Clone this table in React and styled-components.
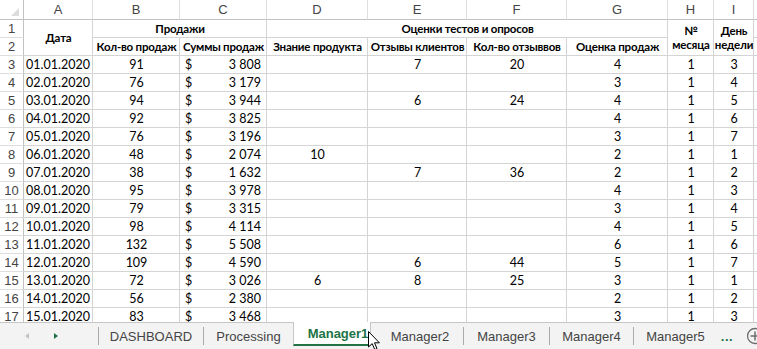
import React from "react";
import styled, { createGlobalStyle } from "styled-components";

const GREEN = "#217346";
const GRID = "#d4d4d4";
const HEAD_LINE = "#c2c2c2";
const HEAD_SEP = "#dedede";

const GlobalStyle = createGlobalStyle`
  html, body { margin: 0; padding: 0; background: #fff; overflow: hidden; }
  body { font-family: "Liberation Sans", Arial, sans-serif; }
`;

const Workbook = styled.div`
  position: relative;
  width: 757px;
  height: 349px;
  overflow: hidden;
  display: flex;
  flex-direction: column;
`;

const Sheet = styled.div`
  flex: 0 0 322px;
  overflow: hidden;
  display: grid;
  grid-template-columns: 24px 69px 87px 87px 101px 99px 100px 101px 46px 40px 1fr;
  grid-template-rows: 20px repeat(17, 18px);
  font-family: Lato, "Liberation Sans", sans-serif;
`;

const Corner = styled.div`
  box-sizing: border-box;
  border-right: 1px solid ${HEAD_LINE};
  border-bottom: 1px solid ${HEAD_LINE};
  display: flex;
  justify-content: flex-end;
  align-items: flex-end;
  padding: 0 4px 3px 0;
`;

const CornerMark = styled.div`
  width: 0;
  height: 0;
  border-left: 8px solid transparent;
  border-bottom: 8px solid #dcdcdc;
`;

const ColHead = styled.div`
  box-sizing: border-box;
  border-right: 1px solid ${HEAD_SEP};
  border-bottom: 1px solid ${HEAD_LINE};
  display: flex;
  align-items: center;
  justify-content: center;
  font-family: "Liberation Sans", Arial, sans-serif;
  font-size: 13px;
  color: #444;
`;

const RowHead = styled.div`
  box-sizing: border-box;
  border-right: 1px solid ${HEAD_LINE};
  border-bottom: 1px solid ${HEAD_SEP};
  display: flex;
  align-items: center;
  justify-content: center;
  font-family: "Liberation Sans", Arial, sans-serif;
  font-size: 13px;
  color: #444;
`;

const justify = { left: "flex-start", center: "center", right: "flex-end" };

const Cell = styled.div`
  box-sizing: border-box;
  border-right: 1px solid ${GRID};
  border-bottom: 1px solid ${GRID};
  grid-column: span ${(p) => p.$cs || 1};
  grid-row: span ${(p) => p.$rs || 1};
  display: flex;
  align-items: center;
  justify-content: ${(p) => justify[p.$align || "center"]};
  padding: 0 2px 0 3px;
  font-size: ${(p) => (p.$bold ? "11.5px" : "12.5px")};
  font-weight: ${(p) => (p.$bold ? 700 : 400)};
  letter-spacing: ${(p) => (p.$bold ? "-0.2px" : "0")};
  line-height: 14px;
  text-align: center;
  color: #000;
  white-space: ${(p) => (p.$wrap ? "normal" : "nowrap")};
  overflow: hidden;
`;

const MoneyCell = styled(Cell)`
  justify-content: space-between;
  padding: 0 5px 0 5px;
`;

// nav | sep | DASHBOARD | sep | Processing | Manager1 | Manager2 | sep | Manager3 | sep | Manager4 | sep | Manager5 | ... | +
const TabBar = styled.div`
  flex: 0 0 27px;
  box-sizing: border-box;
  border-top: 1px solid #c6c6c6;
  background: #f3f3f3;
  display: grid;
  grid-template-columns: 98px 1px 104px 1px 89px 78px 92px 1px 85px 1px 83px 1px 83px 20px 1fr;
  align-items: start;
  font-family: "Liberation Sans", Arial, sans-serif;
  font-size: 13px;
  color: #444;
`;

const Nav = styled.div`
  height: 26px;
  display: flex;
  align-items: center;
  padding-left: 25px;
  gap: 25px;
`;

const Arrow = styled.span`
  width: 0;
  height: 0;
  border-top: 3.5px solid transparent;
  border-bottom: 3.5px solid transparent;
  ${(p) =>
    p.$dir === "left"
      ? "border-right: 4px solid #c3c3c3;"
      : `border-left: 4px solid ${GREEN};`}
`;

const Sep = styled.span`
  height: 18px;
  margin-top: 4px;
  background: #ababab;
`;

const Tab = styled.div`
  height: 26px;
  box-sizing: border-box;
  padding-left: ${(p) => p.$shift || 0}px;
  display: flex;
  align-items: center;
  justify-content: center;
  white-space: nowrap;
`;

const ActiveTab = styled.div`
  height: 24px;
  margin-top: -1px;
  box-sizing: border-box;
  background: #fff;
  border-left: 1px solid #c6c6c6;
  border-right: 1px solid #c6c6c6;
  border-bottom: 2px solid ${GREEN};
  display: flex;
  align-items: center;
  justify-content: center;
  padding-left: 12px;
  color: ${GREEN};
  font-weight: 700;
  white-space: nowrap;
`;

const More = styled.div`
  height: 26px;
  display: flex;
  align-items: center;
  justify-content: center;
  color: ${GREEN};
  font-weight: 700;
  letter-spacing: 0.5px;
`;

const AddSheet = styled.div`
  height: 26px;
  display: flex;
  align-items: center;
  padding-left: 9px;
  overflow: hidden;
`;

const PlusIcon = styled.svg`
  flex-shrink: 0;
  width: 18px;
  height: 18px;
`;

const Pointer = styled.svg`
  position: absolute;
  left: 368px;
  top: 331px;
`;

const cols = ["A", "B", "C", "D", "E", "F", "G", "H", "I", ""];

const rows = [
  ["01.01.2020", 91, "3 808", "", 7, 20, 4, 1, 3],
  ["02.01.2020", 76, "3 179", "", "", "", 3, 1, 4],
  ["03.01.2020", 94, "3 944", "", 6, 24, 4, 1, 5],
  ["04.01.2020", 92, "3 825", "", "", "", 4, 1, 6],
  ["05.01.2020", 76, "3 196", "", "", "", 3, 1, 7],
  ["06.01.2020", 48, "2 074", 10, "", "", 2, 1, 1],
  ["07.01.2020", 38, "1 632", "", 7, 36, 2, 1, 2],
  ["08.01.2020", 95, "3 978", "", "", "", 4, 1, 3],
  ["09.01.2020", 79, "3 315", "", "", "", 3, 1, 4],
  ["10.01.2020", 98, "4 114", "", "", "", 4, 1, 5],
  ["11.01.2020", 132, "5 508", "", "", "", 6, 1, 6],
  ["12.01.2020", 109, "4 590", "", 6, 44, 5, 1, 7],
  ["13.01.2020", 72, "3 026", 6, 8, 25, 3, 1, 1],
  ["14.01.2020", 56, "2 380", "", "", "", 2, 1, 2],
  ["15.01.2020", 83, "3 468", "", "", "", 3, 1, 3],
];

const sheets = [
  { name: "Manager2", shift: 6 },
  { name: "Manager3", shift: 0 },
  { name: "Manager4", shift: 0 },
  { name: "Manager5", shift: 0 },
];

function App() {
  return (
    <Workbook>
      <GlobalStyle />
      <Sheet>
        <Corner>
          <CornerMark />
        </Corner>
        {cols.map((c, i) => (
          <ColHead key={i}>{c}</ColHead>
        ))}

        <RowHead>1</RowHead>
        <Cell $rs={2} $bold>Дата</Cell>
        <Cell $cs={2} $bold>Продажи</Cell>
        <Cell $cs={4} $bold>Оценки тестов и опросов</Cell>
        <Cell $rs={2} $bold $wrap>№<br />месяца</Cell>
        <Cell $rs={2} $bold $wrap>День<br />недели</Cell>
        <Cell />

        <RowHead>2</RowHead>
        <Cell $bold>Кол-во продаж</Cell>
        <Cell $bold>Суммы продаж</Cell>
        <Cell $bold>Знание продукта</Cell>
        <Cell $bold>Отзывы клиентов</Cell>
        <Cell $bold>Кол-во отзыввов</Cell>
        <Cell $bold>Оценка продаж</Cell>
        <Cell />

        {rows.map((r, i) => (
          <React.Fragment key={i}>
            <RowHead>{i + 3}</RowHead>
            <Cell $align="right">{r[0]}</Cell>
            <Cell>{r[1]}</Cell>
            <MoneyCell>
              <span>$</span>
              <span>{r[2]}</span>
            </MoneyCell>
            <Cell>{r[3]}</Cell>
            <Cell>{r[4]}</Cell>
            <Cell>{r[5]}</Cell>
            <Cell>{r[6]}</Cell>
            <Cell>{r[7]}</Cell>
            <Cell>{r[8]}</Cell>
            <Cell />
          </React.Fragment>
        ))}
      </Sheet>

      <TabBar>
        <Nav>
          <Arrow $dir="left" />
          <Arrow $dir="right" />
        </Nav>
        <Sep />
        <Tab>DASHBOARD</Tab>
        <Sep />
        <Tab>Processing</Tab>
        <ActiveTab>Manager1</ActiveTab>
        {sheets.map((s, i) => (
          <React.Fragment key={s.name}>
            {i > 0 && <Sep />}
            <Tab $shift={s.shift}>{s.name}</Tab>
          </React.Fragment>
        ))}
        <More>...</More>
        <AddSheet>
          <PlusIcon viewBox="0 0 18 18">
            <circle cx="9" cy="9" r="7.5" fill="none" stroke="#6e6e6e" strokeWidth="1.3" />
            <path d="M9 4.5v9M4.5 9h9" stroke="#6e6e6e" strokeWidth="1.5" />
          </PlusIcon>
        </AddSheet>
      </TabBar>

      <Pointer width="13" height="20" viewBox="0 0 13 20">
        <path
          d="M0.5 0.5 L0.5 16 L4.2 12.6 L6.8 18.6 L9 17.6 L6.5 11.8 L11.4 11.8 Z"
          fill="#fff"
          stroke="#000"
          strokeWidth="1"
          strokeLinejoin="miter"
        />
      </Pointer>
    </Workbook>
  );
}

export default App;
